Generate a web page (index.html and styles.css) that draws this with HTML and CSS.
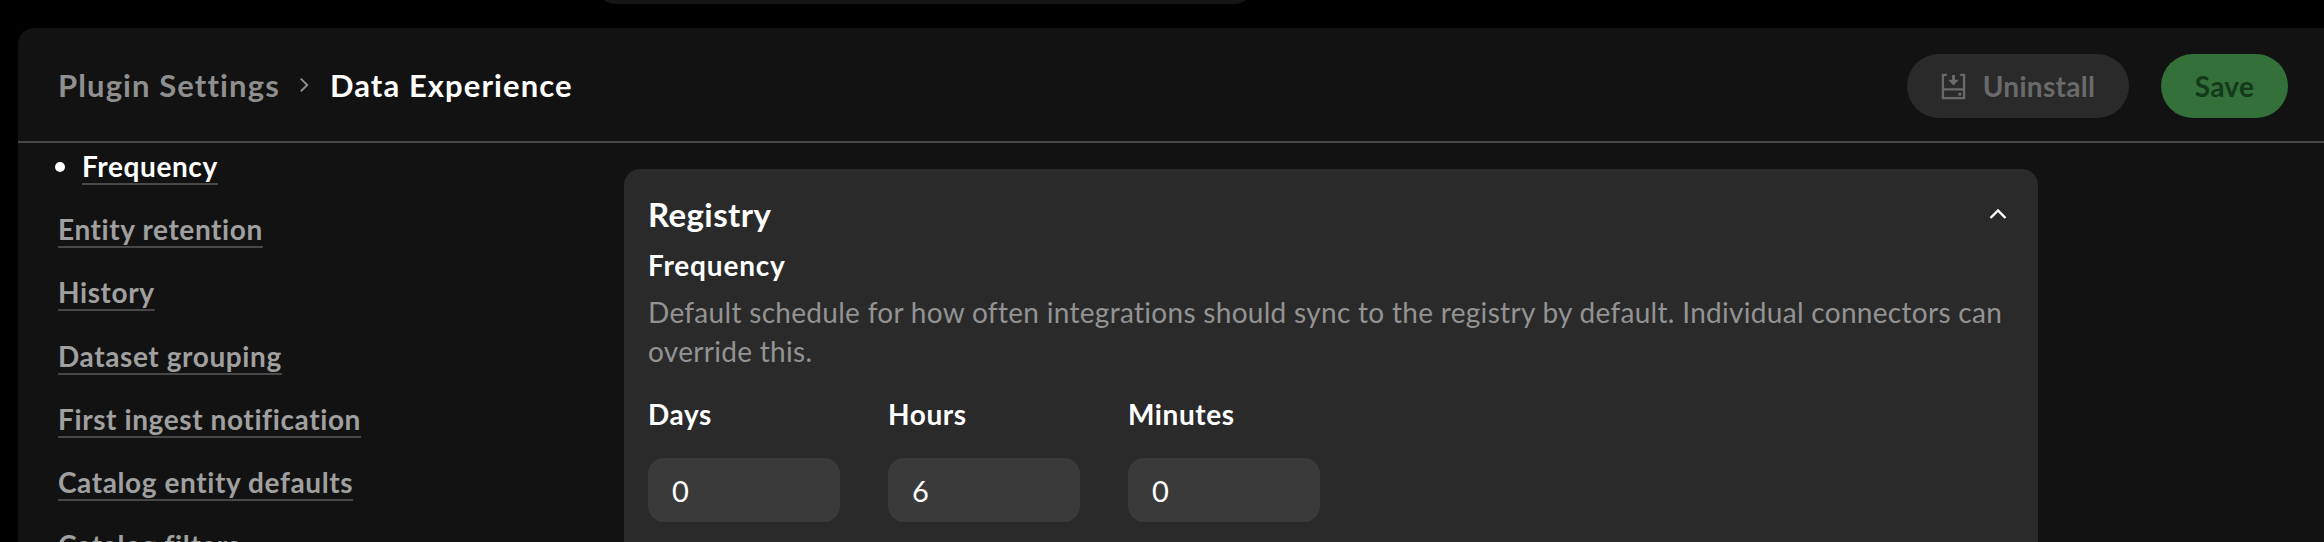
FILE: index.html
```html
<!DOCTYPE html>
<html lang="en">
<head>
  <meta charset="UTF-8">
  <title>Plugin Settings</title>
  <link rel="stylesheet" href="styles.css">
</head>
<body>

  <div class="topbar">
    <div class="search-pill"></div>
  </div>

  <div class="panel">

    <header class="panel-header">
      <div class="crumbs">
        <span class="crumb-parent">Plugin Settings</span>
        <svg class="crumb-chevron" viewBox="0 0 12 20" width="10" height="16">
          <path d="M2 2l8 8-8 8" fill="none" stroke="#8f8f8f" stroke-width="2.400"/>
        </svg>
        <span class="crumb-current">Data Experience</span>
      </div>
      <div class="actions">
        <button class="btn btn-uninstall">
          <svg viewBox="0 0 26 28" width="25" height="27">
            <g fill="none" stroke="#6a6a6a" stroke-width="2.4">
              <path d="M6 2H2v24h22V2h-4"/>
              <path d="M2 17h22"/>
            </g>
            <path d="M11.500 2h3v5h4l-5.500 6-5.500-6h4z" fill="#6a6a6a"/>
            <rect x="18" y="20.500" width="3" height="3" fill="#6a6a6a"/>
          </svg>
          Uninstall
        </button>
        <button class="btn btn-save">Save</button>
      </div>
    </header>

    <div class="panel-body">
      <nav class="side-nav">
        <a class="side-link active" href="#">Frequency</a>
        <a class="side-link" href="#">Entity retention</a>
        <a class="side-link" href="#">History</a>
        <a class="side-link" href="#">Dataset grouping</a>
        <a class="side-link" href="#">First ingest notification</a>
        <a class="side-link" href="#">Catalog entity defaults</a>
        <a class="side-link" href="#">Catalog filters</a>
      </nav>

      <section class="card">
        <div class="card-title">
          <h2>Registry</h2>
          <svg viewBox="0 0 18 12" width="18" height="12">
            <path d="M1.500 10L9 2.500 16.500 10" fill="none" stroke="#fff" stroke-width="2.400"/>
          </svg>
        </div>
        <h3>Frequency</h3>
        <p class="desc">Default schedule for how often integrations should sync to the registry by default. Individual connectors can override this.</p>
        <div class="fields">
          <label class="field">
            <span>Days</span>
            <input type="text" value="0">
          </label>
          <label class="field">
            <span>Hours</span>
            <input type="text" value="6">
          </label>
          <label class="field">
            <span>Minutes</span>
            <input type="text" value="0">
          </label>
        </div>
      </section>
    </div>
  </div>

</body>
</html>
```

FILE: styles.css
```css
html, body {
  height: 542px;
  overflow: hidden;
}
body {
  margin: 0;
  background: #000;
  color: #fff;
  font-family: Lato, "Open Sans", sans-serif;
}
/* === Top bar === */
.topbar {
  height: 28px;
  overflow: hidden;
}
.search-pill {
  width: 658px;
  height: 40px;
  margin: -36px 0 0 596px;
  border-radius: 20px;
  background: #161616;
}
/* === Panel === */
.panel {
  margin-left: 18px;
  background: #121212;
  border-radius: 16px 0 0 0;
  height: 514px;
  overflow: hidden;
}
.panel-header {
  height: 115px;
  padding: 3px 36px 0 40px;
  box-sizing: border-box;
  display: flex;
  align-items: center;
  justify-content: space-between;
  border-bottom: 2px solid #484848;
}
.crumbs {
  display: flex;
  align-items: center;
  margin-top: -2px;
  font-size: 31px;
  font-weight: 700;
  letter-spacing: 1.1px;
}
.crumb-parent {
  color: #8f8f8f;
}
.crumb-chevron {
  margin: 0 21px 0 19px;
}
.actions {
  display: flex;
  gap: 32px;
}
.btn {
  height: 64px;
  border: 0;
  border-radius: 32px;
  display: flex;
  align-items: center;
  justify-content: center;
  font-family: inherit;
  font-size: 28px;
  font-weight: 700;
  letter-spacing: 0.3px;
}
.btn-uninstall {
  width: 222px;
  gap: 17px;
  background: #2a2a2a;
  color: #6a6a6a;
}
.btn-save {
  width: 127px;
  background: #33703a;
  color: #143a1b;
}
/* === Body === */
.panel-body {
  display: flex;
  align-items: flex-start;
}
.side-nav {
  width: 566px;
  padding: 3px 0 0 40px;
  display: flex;
  flex-direction: column;
  align-items: flex-start;
  gap: 23.2px;
  flex-shrink: 0;
}
.side-link {
  height: 40px;
  line-height: 40px;
  font-size: 28px;
  font-weight: 700;
  letter-spacing: 0.6px;
  color: #a0a0a0;
  text-decoration: underline;
  text-decoration-color: #484848;
  text-decoration-thickness: 2px;
  text-underline-offset: 6px;
}
.side-link.active {
  position: relative;
  margin-left: 24px;
  color: #fff;
}
.side-link.active::before {
  content: "";
  position: absolute;
  left: -27px;
  top: 16px;
  width: 10px;
  height: 10px;
  border-radius: 50%;
  background: #fff;
}
/* === Card === */
.card {
  width: 1414px;
  margin-top: 26px;
  padding: 25px 31px 40px 24px;
  box-sizing: border-box;
  background: #2a2a2a;
  border-radius: 16px;
}
.card-title {
  display: flex;
  align-items: center;
  justify-content: space-between;
}
.card h2 {
  margin: 0;
  font-size: 33px;
  line-height: 40px;
  font-weight: 700;
  letter-spacing: 0.4px;
}
.card h3 {
  margin: 13px 0 0;
  font-size: 28px;
  line-height: 36px;
  font-weight: 700;
  letter-spacing: 0.8px;
}
.desc {
  margin: 10px 0 0;
  font-size: 28px;
  line-height: 39px;
  letter-spacing: 0.3px;
  color: #939393;
}
.fields {
  display: flex;
  gap: 48px;
  margin-top: 25px;
}
.field {
  display: flex;
  flex-direction: column;
  gap: 26px;
  font-size: 28px;
  line-height: 36px;
  font-weight: 700;
  letter-spacing: 0.6px;
}
.field input {
  width: 192px;
  height: 64px;
  padding: 0 24px;
  box-sizing: border-box;
  border: 0;
  border-radius: 16px;
  background: #3a3a3a;
  color: #fff;
  font-family: inherit;
  font-size: 29px;
}
```
